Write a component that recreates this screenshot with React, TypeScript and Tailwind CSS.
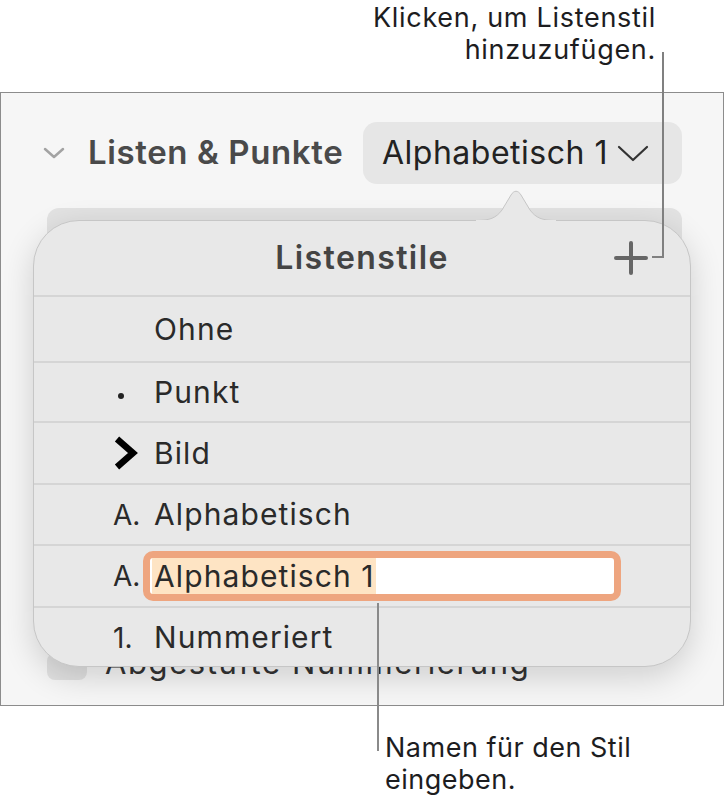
// Listenstile-Popover mit zwei Beschriftungen

const rows = [
  { marker: '', label: 'Ohne', h: 'h-[66px]' },
  { marker: 'dot', label: 'Punkt', h: 'h-[60px]' },
  { marker: 'img', label: 'Bild', h: 'h-[62px]' },
  { marker: 'A.', label: 'Alphabetisch', h: 'h-[61px]' },
  { marker: 'A.', label: 'Alphabetisch 1', h: 'h-[62px]', editing: true },
  { marker: '1.', label: 'Nummeriert', h: 'h-[61px]' },
]

export default function App() {
  return (
    <div className="relative w-[724px] h-[801px] overflow-hidden bg-white font-['Inter','Noto_Sans',sans-serif] text-[#1d1d1f]">
      {/* Beschriftung oben */}
      <div className="h-[92px] pt-[2px] pr-[68px] flex justify-end">
        <p className="text-right text-[27px] leading-[32px] tracking-[0.7px]">
          Klicken, um Listenstil
          <br />
          hinzuzufügen.
        </p>
      </div>

      {/* Inspektor-Bereich */}
      <div className="h-[614px] border border-[#8c8c8c] bg-[#f6f6f6] flex flex-col">
        <div className="mt-[29px] h-[62px] pl-[42px] pr-[41px] flex items-center">
          <svg width="22" height="12" viewBox="0 0 22 12" className="shrink-0">
            <polyline points="2,2 11,10 20,2" fill="none" stroke="#a3a3a3" strokeWidth="2.5" strokeLinecap="round" strokeLinejoin="round" />
          </svg>
          <span className="ml-[23px] text-[33px] font-semibold text-[#4a4a4a] tracking-[0.6px]">Listen &amp; Punkte</span>
          <button className="ml-auto w-[319px] h-[62px] rounded-[14px] bg-[#e6e6e6] pl-[19px] flex items-center gap-[9px] text-[32px] text-[#222] tracking-[0.5px]">
            Alphabetisch 1
            <svg width="32" height="18" viewBox="0 0 32 18">
              <polyline points="2,3 16,16 30,3" fill="none" stroke="#333" strokeWidth="2.2" strokeLinecap="round" strokeLinejoin="round" />
            </svg>
          </button>
        </div>

        <div className="mt-[24px] ml-[46px] mr-[41px] h-[44px] rounded-t-[12px] bg-[#e2e2e2]" />

        <div className="mt-[394px] ml-[46px] h-[34px] flex items-center gap-[18px]">
          <div className="self-end w-[40px] h-[27px] rounded-[8px] bg-[#e1e1e1]" />
          <span className="text-[31px] text-[#333] leading-[34px] tracking-[1.6px]">Abgestufte Nummerierung</span>
        </div>
      </div>

      {/* Beschriftung unten */}
      <div className="mt-[26px] pl-[385px]">
        <p className="text-[27px] leading-[32px] tracking-[0.5px]">
          Namen für den Stil
          <br />
          eingeben.
        </p>
      </div>

      {/* Popover */}
      <div className="absolute left-[33px] top-[220px] w-[658px] h-[447px] rounded-[46px] border border-[#c6c6c6] bg-[#e8e8e8] shadow-[0_10px_32px_rgba(0,0,0,0.16)] overflow-hidden flex flex-col">
        <div className="h-[74px] shrink-0 relative flex items-center justify-center">
          <span className="text-[32px] font-semibold text-[#444] tracking-[1.4px]">Listenstile</span>
          <svg width="34" height="34" viewBox="0 0 34 34" className="absolute right-[42px] top-[20px]">
            <path d="M17 2 V32 M2 17 H32" stroke="#666" strokeWidth="4" strokeLinecap="round" />
          </svg>
        </div>
        {rows.map((r) => (
          <div key={r.label} className={`${r.h} shrink-0 border-t-2 border-[#d5d5d5] flex items-center text-[30px] text-[#2a2a2a] tracking-[1.1px]`}>
            <div className="w-[120px] shrink-0 pl-[79px] flex items-center tracking-normal">
              {r.marker === 'dot' && <span className="ml-[5px] mt-[8px] w-[6px] h-[6px] rounded-full bg-[#222]" />}
              {r.marker === 'img' && (
                <svg width="26" height="34" viewBox="0 0 26 34">
                  <polyline points="4,3 20,17 4,31" fill="none" stroke="#000" strokeWidth="6.5" strokeLinejoin="miter" />
                </svg>
              )}
              {r.marker !== 'dot' && r.marker !== 'img' && <span className="text-[28px]">{r.marker}</span>}
            </div>
            {r.editing ? (
              <div className="-ml-[11px] w-[478px] h-[50px] rounded-[10px] border-[7px] border-[#eea57f] bg-white flex items-stretch">
                <span className="ml-[2px] pl-[2px] pr-[1px] bg-[#fee4c4] leading-[36px]">Alphabetisch 1</span>
              </div>
            ) : (
              <span>{r.label}</span>
            )}
          </div>
        ))}
      </div>

      {/* Pfeil des Popovers */}
      <svg width="80" height="34" viewBox="0 0 80 34" className="absolute left-[476px] top-[188px]">
        <path d="M0 32.5 C14 32.5 20 30 26 22 L35 7 C38 2 42 2 45 7 L54 22 C60 30 66 32.5 80 32.5" fill="#e8e8e8" stroke="#c6c6c6" strokeWidth="1" />
        <rect x="0" y="32" width="80" height="2" fill="#e8e8e8" />
      </svg>

      {/* Linien der Beschriftungen */}
      <div className="absolute left-[662px] top-[52px] w-[2px] h-[206px] bg-[#808080]" />
      <div className="absolute left-[652px] top-[256px] w-[12px] h-[2px] bg-[#808080]" />
      <div className="absolute left-[377px] top-[603px] w-[2px] h-[148px] bg-[#8a8a8a]" />
    </div>
  )
}
